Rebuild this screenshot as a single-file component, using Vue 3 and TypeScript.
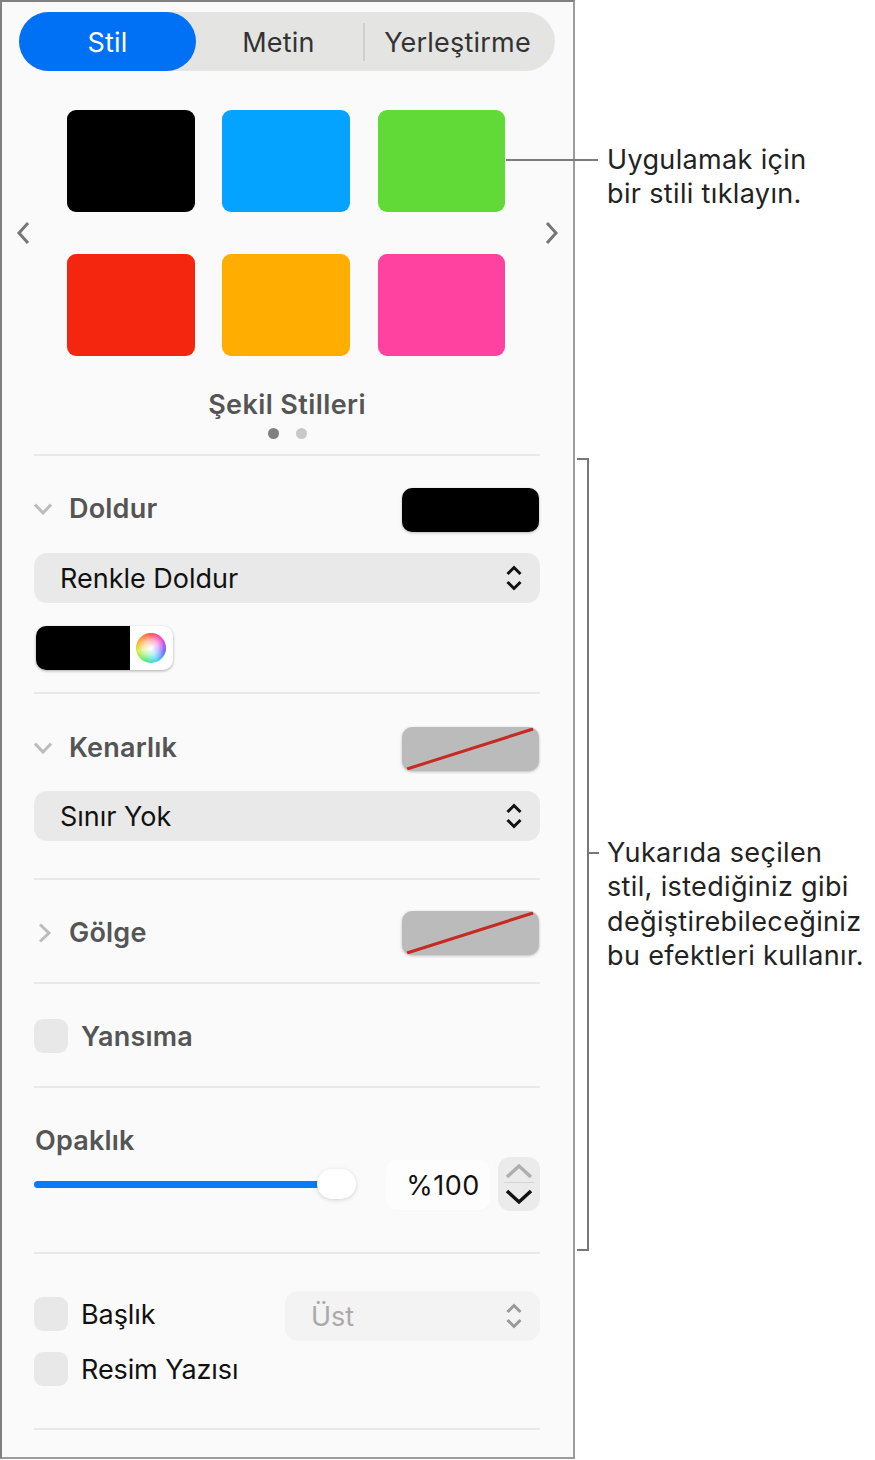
<script setup lang="ts">
const swatches = ["#000000", "#04a3ff", "#61da38", "#f4260f", "#ffae00", "#ff429f"];
const tabs = ["Metin", "Yerleştirme"];
</script>

<template>
  <div class="page">
    <aside class="panel">
      <div class="tabs">
        <div class="tab active">Stil</div>
        <div class="tab metin">{{ tabs[0] }}</div>
        <div class="tab-sep"></div>
        <div class="tab yer">{{ tabs[1] }}</div>
      </div>

      <div class="carousel">
        <svg class="arrow" width="14" height="24" viewBox="0 0 14 24">
          <path d="M12 2 L3 12 L12 22" />
        </svg>
        <div class="swatches">
          <div v-for="c in swatches" :key="c" class="swatch" :style="{ background: c }"></div>
        </div>
        <svg class="arrow" width="14" height="24" viewBox="0 0 14 24">
          <path d="M2 2 L11 12 L2 22" />
        </svg>
      </div>

      <section class="section styles">
        <div class="styles-title">Şekil Stilleri</div>
        <div class="dots"><span class="dot on"></span><span class="dot"></span></div>
      </section>

      <section class="section fill">
        <div class="head">
          <svg class="disc" width="18" height="12" viewBox="0 0 18 12"><path d="M1 1.5 L9 10 L17 1.5" /></svg>
          <span class="head-label">Doldur</span>
          <div class="well black"></div>
        </div>
        <div class="select">
          <span>Renkle Doldur</span>
          <svg class="updown" width="18" height="26" viewBox="0 0 18 26"><path d="M2.5 9 L9 2.5 L15.5 9 M2.5 17 L9 23.5 L15.5 17" /></svg>
        </div>
        <div class="color-well">
          <div class="color-black"></div>
          <div class="color-side"><div class="wheel"></div></div>
        </div>
      </section>

      <section class="section border">
        <div class="head">
          <svg class="disc" width="18" height="12" viewBox="0 0 18 12"><path d="M1 1.5 L9 10 L17 1.5" /></svg>
          <span class="head-label">Kenarlık</span>
          <div class="well none">
            <svg width="137" height="44" viewBox="0 0 137 44"><line x1="5" y1="42" x2="131" y2="2" /></svg>
          </div>
        </div>
        <div class="select">
          <span>Sınır Yok</span>
          <svg class="updown" width="18" height="26" viewBox="0 0 18 26"><path d="M2.5 9 L9 2.5 L15.5 9 M2.5 17 L9 23.5 L15.5 17" /></svg>
        </div>
      </section>

      <section class="section shadow">
        <div class="head">
          <svg class="disc side" width="18" height="20" viewBox="0 0 18 20"><path d="M6 1.5 L15 10 L6 18.5" /></svg>
          <span class="head-label">Gölge</span>
          <div class="well none">
            <svg width="137" height="44" viewBox="0 0 137 44"><line x1="5" y1="42" x2="131" y2="2" /></svg>
          </div>
        </div>
      </section>

      <section class="section reflect">
        <label class="check-row">
          <span class="check"></span>
          <span class="head-label">Yansıma</span>
        </label>
      </section>

      <section class="section opacity">
        <div class="head-label opacity-label">Opaklık</div>
        <div class="opacity-row">
          <div class="slider">
            <div class="track"></div>
            <div class="thumb"></div>
          </div>
          <div class="percent">%100</div>
          <div class="stepper">
            <svg class="step up" width="28" height="16" viewBox="0 0 28 16"><path d="M2 14 L14 3 L26 14" /></svg>
            <div class="step-sep"></div>
            <svg class="step down" width="28" height="16" viewBox="0 0 28 16"><path d="M2 2 L14 13 L26 2" /></svg>
          </div>
        </div>
      </section>

      <section class="section captions">
        <div class="caption-row">
          <label class="check-row">
            <span class="check"></span>
            <span class="plain">Başlık</span>
          </label>
          <div class="select small">
            <span>Üst</span>
            <svg class="updown" width="18" height="26" viewBox="0 0 18 26"><path d="M2.5 9 L9 2.5 L15.5 9 M2.5 17 L9 23.5 L15.5 17" /></svg>
          </div>
        </div>
        <label class="check-row second">
          <span class="check"></span>
          <span class="plain">Resim Yazısı</span>
        </label>
      </section>
    </aside>

    <!-- callouts sit on top of the page, outside the panel flow -->
    <div class="leader-top"></div>
    <p class="note note-top">Uygulamak için<br />bir stili tıklayın.</p>
    <div class="bracket"></div>
    <div class="leader-mid"></div>
    <p class="note note-mid">
      Yukarıda seçilen<br />stil, istediğiniz gibi<br />değiştirebileceğiniz<br />bu efektleri kullanır.
    </p>
  </div>
</template>

<style scoped>
.page {
  position: relative;
  width: 875px;
  height: 1460px;
  background: #fff;
  font-family: Inter, "Noto Sans", sans-serif;
  overflow: hidden;
}

.panel {
  box-sizing: border-box;
  width: 575px;
  height: 1459px;
  padding-top: 10px;
  background: #fafafa;
  border: 2px solid #9c9c9c;
  border-left-color: #808080;
  border-top-color: #808080;
}

.tabs {
  display: flex;
  align-items: center;
  height: 59px;
  margin: 0 18px 0 17px;
  border-radius: 30px;
  background: #e4e4e3;
  font-size: 27px;
  letter-spacing: 0.2px;
  color: #333;
}

.tab {
  padding-top: 2px;
  text-align: center;
  line-height: 57px;
}

.tab.active {
  width: 177px;
  border-radius: 30px;
  background: #0071f5;
  color: #fff;
}

.tab.metin {
  width: 165px;
}

.tab-sep {
  width: 2px;
  height: 38px;
  margin-left: 2px;
  background: #cfcfcf;
}

.tab.yer {
  flex: 1;
  padding-right: 5px;
}

.carousel {
  display: flex;
  align-items: center;
  margin-top: 39px;
  padding-left: 14px;
}

.arrow path {
  fill: none;
  stroke: #777;
  stroke-width: 3;
}

.swatches {
  display: grid;
  grid-template-columns: repeat(3, 128px);
  column-gap: 27px;
  row-gap: 42px;
  margin: 0 40px 0 37px;
}

.swatch {
  height: 102px;
  border-radius: 9px;
}

.swatch:nth-child(3n) {
  margin-left: 1px;
}

.section {
  margin: 0 33px 0 32px;
  border-bottom: 2px solid #e9e9e9;
}

.styles {
  padding-top: 32px;
  padding-bottom: 15px;
  text-align: center;
}

.styles-title {
  font-size: 27px;
  line-height: 34px;
  font-weight: 600;
  letter-spacing: 0.4px;
  color: #555;
}

.dots {
  display: flex;
  justify-content: center;
  gap: 17px;
  margin-top: 6px;
}

.dot {
  width: 11px;
  height: 11px;
  border-radius: 50%;
  background: #c8c8c8;
}

.dot.on {
  background: #808080;
}

.head {
  display: flex;
  align-items: center;
  height: 44px;
}

.disc {
  width: 18px;
  margin-right: 17px;
}

.disc path {
  fill: none;
  stroke: #bcbcbc;
  stroke-width: 3;
}

.head-label {
  font-size: 27px;
  line-height: 34px;
  font-weight: 600;
  letter-spacing: 0.2px;
  color: #555;
}

.fill .head-label,
.border .head-label,
.fill .disc,
.border .disc {
  margin-top: -2px;
}

.well {
  width: 137px;
  height: 44px;
  margin-left: auto;
  margin-right: 1px;
  border-radius: 10px;
  box-shadow: 0 1px 3px rgba(0, 0, 0, 0.25);
  overflow: hidden;
}

.well.black {
  background: #000;
}

.well.none {
  background: #bbb;
}

.well svg {
  display: block;
}

.well line {
  stroke: #c62a22;
  stroke-width: 3;
}

.select {
  display: flex;
  align-items: center;
  justify-content: space-between;
  box-sizing: border-box;
  height: 50px;
  padding: 0 17px 0 26px;
  border-radius: 13px;
  background: #e9e9e9;
  font-size: 27px;
  color: #111;
}

.updown path {
  fill: none;
  stroke: #111;
  stroke-width: 3;
}

.fill {
  padding-top: 32px;
  padding-bottom: 22px;
}

.fill .select {
  margin-top: 21px;
}

.color-well {
  display: flex;
  width: 137px;
  height: 44px;
  margin: 23px 0 0 2px;
  border-radius: 10px;
  background: #fff;
  box-shadow: 0 1px 3px rgba(0, 0, 0, 0.32);
  overflow: hidden;
}

.color-black {
  width: 94px;
  background: #000;
}

.color-side {
  flex: 1;
  display: flex;
  align-items: center;
  justify-content: center;
  padding-right: 2px;
}

.wheel {
  width: 30px;
  height: 30px;
  border-radius: 50%;
  background:
    radial-gradient(circle, #fff 0%, rgba(255, 255, 255, 0.6) 35%, rgba(255, 255, 255, 0) 68%),
    conic-gradient(#ff4d4d, #f046d0, #6a5cff, #3fd0ff, #4dea7a, #d8ec3c, #ff9a2e, #ff4d4d);
}

.border {
  padding-top: 33px;
  padding-bottom: 37px;
}

.border .select {
  margin-top: 20px;
}

.shadow {
  padding-top: 31px;
  padding-bottom: 27px;
}

.reflect {
  padding-top: 35px;
  padding-bottom: 33px;
}

.check-row {
  display: flex;
  align-items: center;
  gap: 13px;
}

.reflect .check-row {
  height: 34px;
}

.reflect .head-label {
  margin-top: 2px;
}

.check {
  width: 34px;
  height: 34px;
  border-radius: 9px;
  background: #e8e8e8;
}

.opacity {
  padding-top: 36px;
  padding-bottom: 41px;
}

.opacity-label {
  margin-left: 1px;
  margin-bottom: -1px;
}

.opacity-row {
  display: flex;
  align-items: flex-start;
  height: 54px;
}

.slider {
  position: relative;
  width: 322px;
  height: 30px;
  margin-top: 12px;
}

.track {
  position: absolute;
  left: 0;
  top: 12px;
  width: 300px;
  height: 7px;
  border-radius: 4px;
  background: #0a7bf5;
}

.thumb {
  position: absolute;
  left: 283px;
  top: 0;
  width: 39px;
  height: 30px;
  border-radius: 15px;
  background: #fff;
  box-shadow: 0 1px 4px rgba(0, 0, 0, 0.16);
}

.percent {
  box-sizing: border-box;
  width: 104px;
  height: 50px;
  margin-top: 3px;
  margin-left: 30px;
  padding-left: 10px;
  padding-top: 1px;
  border-radius: 10px;
  background: #fdfdfd;
  box-shadow: 0 1px 2px rgba(0, 0, 0, 0.02);
  font-size: 27px;
  letter-spacing: 0.5px;
  line-height: 50px;
  text-align: center;
  color: #111;
}

.stepper {
  display: flex;
  flex-direction: column;
  align-items: center;
  box-sizing: border-box;
  flex-shrink: 0;
  width: 42px;
  height: 54px;
  margin-left: 8px;
  padding-top: 6px;
  border-radius: 12px;
  background: #ebebeb;
}

.step {
  display: block;
}

.step path {
  fill: none;
  stroke-width: 3.5;
}

.step.up path {
  stroke: #aeaeae;
}

.step.down path {
  stroke: #111;
}

.step-sep {
  flex-shrink: 0;
  width: 30px;
  height: 1px;
  margin: 3px 0 6px;
  background: #d4d4d4;
}

.captions {
  padding-top: 37px;
  padding-bottom: 42px;
}

.caption-row {
  display: flex;
  align-items: center;
  justify-content: space-between;
}

.caption-row .check-row {
  margin-top: -4px;
}

.plain {
  font-size: 27px;
  letter-spacing: -0.1px;
  color: #111;
}

.select.small {
  width: 255px;
  background: #f3f3f3;
  color: #aaa;
}

.select.small .updown path {
  stroke: #999;
}

.second {
  margin-top: 11px;
}

.leader-top {
  position: absolute;
  left: 506px;
  top: 159px;
  width: 92px;
  height: 2px;
  background: #7c7c7c;
}

.note {
  position: absolute;
  left: 607px;
  margin: 0;
  font-size: 27px;
  letter-spacing: 0.35px;
  line-height: 34.4px;
  color: #222;
  white-space: nowrap;
}

.note-top {
  top: 143px;
}

.note-mid {
  top: 836px;
}

.bracket {
  position: absolute;
  left: 577px;
  top: 458px;
  box-sizing: border-box;
  width: 12px;
  height: 793px;
  border: 2px solid #777;
  border-left: none;
}

.leader-mid {
  position: absolute;
  left: 589px;
  top: 852px;
  width: 10px;
  height: 2px;
  background: #777;
}
</style>
